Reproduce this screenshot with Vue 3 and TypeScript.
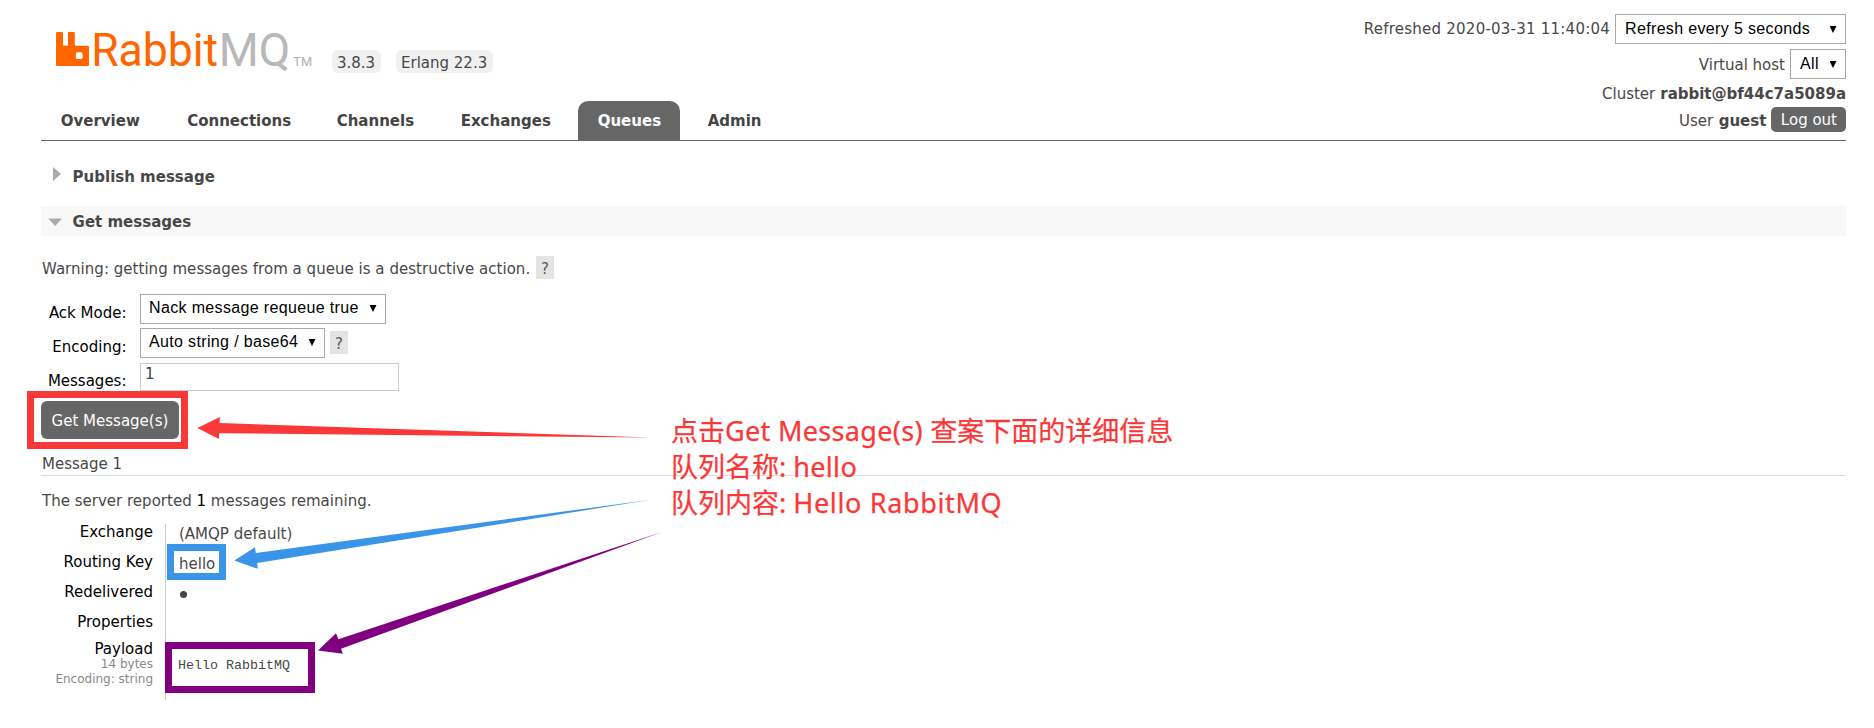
<script setup lang="ts">
interface Tab { name: string; active?: boolean }

const tabs: Tab[] = [
  { name: 'Overview' },
  { name: 'Connections' },
  { name: 'Channels' },
  { name: 'Exchanges' },
  { name: 'Queues', active: true },
  { name: 'Admin' },
]
</script>

<template>
  <div class="page">
    <header class="header">
      <div class="brand-side">
        <div class="brand">
          <svg class="logo" width="262" height="60" viewBox="0 -10 262 60">
            <path
              fill="#ff6600" fill-rule="evenodd"
              d="M1.3 2H5.8Q7 2 7 3.2V14.2Q7 15.7 8.5 15.7H10.6Q12 15.7 12 14.2V3.2Q12 2 13.2 2H17.6Q18.8 2 18.8 3.2V14.2Q18.8 15.7 20.3 15.7H31.5Q33 15.7 33 17.2V34.5Q33 36 31.5 36H1.3Q0 36 0 34.7V3.3Q0 2 1.3 2ZM21.4 22.3Q19.8 22.3 19.8 23.9V27.3Q19.8 28.9 21.4 28.9H25Q26.6 28.9 26.6 27.3V23.9Q26.6 22.3 25 22.3Z"
            />
            <text class="logo-rabbit" x="35.2" y="35.7" textLength="127" lengthAdjust="spacingAndGlyphs">Rabbit</text>
            <text class="logo-mq" x="162.8" y="35.7" textLength="71.5" lengthAdjust="spacingAndGlyphs">MQ</text>
            <text class="logo-tm" x="237.3" y="36" textLength="18.8" lengthAdjust="spacingAndGlyphs">TM</text>
          </svg>
          <span class="badge">3.8.3</span>
          <span class="badge erlang">Erlang 22.3</span>
        </div>
        <nav class="tabs">
          <a v-for="tab in tabs" :key="tab.name" class="tab" :class="{ active: tab.active }">{{ tab.name }}</a>
        </nav>
      </div>
      <div class="status">
        <div class="status-row refresh">
          <span class="stamp">Refreshed 2020-03-31 11:40:04</span>
          <div class="select refresh-select"><span>Refresh every 5 seconds</span><i class="caret"></i></div>
        </div>
        <div class="status-row vhost">
          <span>Virtual host</span>
          <div class="select vhost-select"><span>All</span><i class="caret"></i></div>
        </div>
        <div class="status-row cluster"><span>Cluster</span><b>rabbit@bf44c7a5089a</b></div>
        <div class="status-row user"><span>User</span><b>guest</b><button class="logout">Log out</button></div>
      </div>
    </header>

    <main>
      <h2 class="section">
        <svg class="marker" width="14" height="16"><path d="M5 1L13 8L5 15Z" fill="#aaa" /></svg>
        Publish message
      </h2>
      <h2 class="section open">
        <svg class="marker" width="14" height="16"><path d="M0.3 4.5H14L7.2 12Z" fill="#aaa" /></svg>
        Get messages
      </h2>
      <p class="warning">
        <span>Warning: getting messages from a queue is a destructive action.</span><span class="help">?</span>
      </p>
      <form class="form">
        <label>Ack Mode:</label>
        <div><div class="select ack"><span>Nack message requeue true</span><i class="caret"></i></div></div>
        <label>Encoding:</label>
        <div class="with-help">
          <div class="select encoding"><span>Auto string / base64</span><i class="caret"></i></div>
          <span class="help">?</span>
        </div>
        <label>Messages:</label>
        <div><input class="count" type="text" value="1" /></div>
      </form>
      <button class="get">Get Message(s)</button>
      <h3 class="message-title">Message 1</h3>
      <p class="remaining">The server reported <em>1</em> messages remaining.</p>
      <div class="facts">
        <div class="key">Exchange</div><div class="value">(AMQP default)</div>
        <div class="key">Routing Key</div><div class="value">hello</div>
        <div class="key">Redelivered</div><div class="value"><i class="dot"></i></div>
        <div class="key">Properties</div><div class="value"></div>
        <div class="key">Payload<small>14 bytes</small><small>Encoding: string</small></div>
        <div class="value payload">Hello RabbitMQ</div>
      </div>
    </main>

    <svg class="overlay" width="1874" height="728">
      <g fill="none" stroke-width="7">
        <rect x="30.5" y="394.5" width="154" height="51" stroke="#fb3838" />
        <rect x="170.5" y="547.5" width="52" height="29" stroke="#3a95e8" />
        <rect x="168.5" y="645.5" width="143" height="44" stroke="#800080" />
      </g>
      <path fill="#fb3838" d="M197.3 428L220 417L219.5 423L650 437.6L219 433.2L219 438.9Z" />
      <path fill="#3a95e8" d="M234.3 560.4L255 547.3L255.8 553.1L649 500L257.2 563.1L257.8 568.8Z" />
      <path fill="#800080" d="M318 650.5L336 633.2L338.4 639.2L662 532L341 648.7L342.8 653.8Z" />
    </svg>
    <div class="note">
      <div>点击<span class="latin">Get Message(s) </span>查案下面的详细信息</div>
      <div>队列名称: <span class="latin">hello</span></div>
      <div>队列内容: <span class="latin wide">Hello RabbitMQ</span></div>
    </div>
  </div>
</template>

<style>
body { background: #fff; }
</style>

<style scoped>
.page {
  position: relative;
  box-sizing: border-box;
  width: 1874px;
  height: 728px;
  overflow: hidden;
  padding: 0 28px 0 41px;
  font: 15px/18px "DejaVu Sans", Verdana, sans-serif;
  color: #484848;
}
.header {
  box-sizing: border-box;
  display: flex;
  justify-content: space-between;
  height: 141px;
  border-bottom: 1px solid #666;
}
.brand-side {
  display: flex;
  flex-direction: column;
  justify-content: space-between;
}
.brand {
  display: flex;
  align-items: flex-start;
  padding: 20px 0 0 15px;
}
.logo { font-family: Roboto, sans-serif; margin-right: 14px; overflow: visible; }
.logo-rabbit { font-size: 47px; fill: #ff6600; }
.logo-mq { font-size: 47px; fill: #b8b8b8; }
.logo-tm { font-size: 12.2px; fill: #b0b0b0; }
.badge {
  box-sizing: border-box;
  width: 49px;
  height: 23px;
  margin: 30px 15px 0 0;
  padding: 4px 0 0 5px;
  border-radius: 6px;
  background: #f0f0f0;
  white-space: nowrap;
}
.badge.erlang { width: 97px; }
.tabs {
  display: grid;
  grid-template-columns: 126.5px 149.5px 124px 137px 110px 100px;
  font-weight: bold;
}
.tab {
  box-sizing: border-box;
  width: max-content;
  height: 39px;
  padding: 11px 0 0 19.7px;
  color: #444;
}
.tab.active {
  width: 102px;
  border-radius: 10px 10px 0 0;
  background: #666;
  color: #fff;
}
.status { padding-top: 14px; }
.status-row {
  display: flex;
  justify-content: flex-end;
  gap: 5px;
}
.status-row.refresh { height: 35px; }
.status-row.vhost { height: 36px; }
.status-row.cluster { height: 22px; }
.status-row.refresh > span { padding-top: 6px; letter-spacing: 0.23px; }
.status-row.vhost > span { padding-top: 7px; }
.status-row.user > span, .status-row.user > b { padding-top: 5px; }
.status-row.user > b { margin-left: 0.5px; margin-right: -0.5px; }
.select {
  box-sizing: border-box;
  display: flex;
  justify-content: space-between;
  height: 30px;
  padding: 5px 8.5px 0 9px;
  border: 1px solid #a9a9a9;
  background: #fff;
  color: #000;
  font: 16px/18px "Liberation Sans", Arial, sans-serif;
  letter-spacing: 0.35px;
  white-space: nowrap;
}
.caret {
  width: 7px;
  height: 7px;
  margin-top: 6px;
  background: #000;
  clip-path: polygon(0 0, 100% 0, 50% 100%);
}
.refresh-select { width: 231px; }
.vhost-select { width: 56px; }
.logout {
  height: 25px;
  padding: 1px 9px 0 10px;
  border: 0;
  border-radius: 5px;
  background: #666;
  color: #fff;
  font: inherit;
}
.section {
  box-sizing: border-box;
  display: flex;
  height: 30px;
  margin: 20px 0 15px;
  padding: 7px 0 0 7px;
  font-size: 15px;
  line-height: 18px;
}
.section.open { margin: 0; background: #f8f8f8; }
.marker { margin: -2px 10.6px 0 0; }
.open .marker { margin-top: 1px; }
.warning {
  display: flex;
  margin: 20px 0 15px 1px;
}
.warning > span:first-child { padding-top: 4px; letter-spacing: 0.03px; }
.warning .help { margin-left: 5.8px; }
.help {
  box-sizing: border-box;
  width: 18px;
  height: 23px;
  padding-top: 4px;
  background: #e4e4e4;
  text-align: center;
  color: #555;
}
.form {
  display: grid;
  grid-template-columns: 87px 1fr;
  grid-template-rows: 34px 35px 38px;
  column-gap: 12px;
  color: #000;
}
.form label { padding: 10px 1.5px 0 0; text-align: right; }
.with-help { display: flex; gap: 5px; }
.with-help .help { margin-top: 3px; }
.form .select { padding-left: 8px; padding-top: 4px; }
.ack { width: 246px; }
.encoding { width: 185px; }
.count {
  display: block;
  box-sizing: border-box;
  width: 259px;
  height: 28px;
  padding: 0 4px 7px;
  border: 1px solid #ccc;
  font: inherit;
  color: #444;
}
.form label:nth-of-type(3) { padding-top: 9px; }
.get {
  display: block;
  height: 38px;
  width: 138px;
  margin: 0;
  padding: 1px 0 0;
  border: 0;
  border-radius: 6px;
  background: #666;
  color: #fff;
  font: inherit;
}
.message-title {
  height: 20px;
  margin: 16px 0 16px;
  padding-left: 1px;
  border-bottom: 1px solid #ddd;
  font: inherit;
}
.remaining { margin: 0 0 14px 1px; letter-spacing: 0.01px; }
.remaining em { font-style: normal; color: #000; }
.facts {
  display: grid;
  grid-template-columns: 124px 1fr;
  grid-template-rows: 30px 30px 30px 27px 59px;
}
.key {
  padding-right: 12px;
  line-height: 16px;
  text-align: right;
  color: #000;
}
.key small { display: block; font-size: 12px; line-height: 15px; color: #888; }
.value { padding: 1px 0 0 13px; border-left: 1px solid #ccc; }
.value.payload {
  padding: 16px 0 0 12px;
  font: 13.33px/18px "Liberation Mono", "Courier New", monospace;
}
.dot {
  display: block;
  width: 7px;
  height: 7px;
  margin: 6px 0 0 1px;
  border-radius: 50%;
  background: #444;
}
.overlay { position: absolute; left: 0; top: 0; }
.note {
  position: absolute;
  left: 671px;
  top: 413px;
  color: #fb3838;
  font: 27px/36px "Noto Sans", "Noto Sans CJK SC", sans-serif;
  -webkit-text-stroke: 0.25px #fb3838;
  white-space: nowrap;
}
.note > div { height: 36px; }
.latin { letter-spacing: 0.32px; }
.latin.wide { letter-spacing: 0.65px; }
</style>
